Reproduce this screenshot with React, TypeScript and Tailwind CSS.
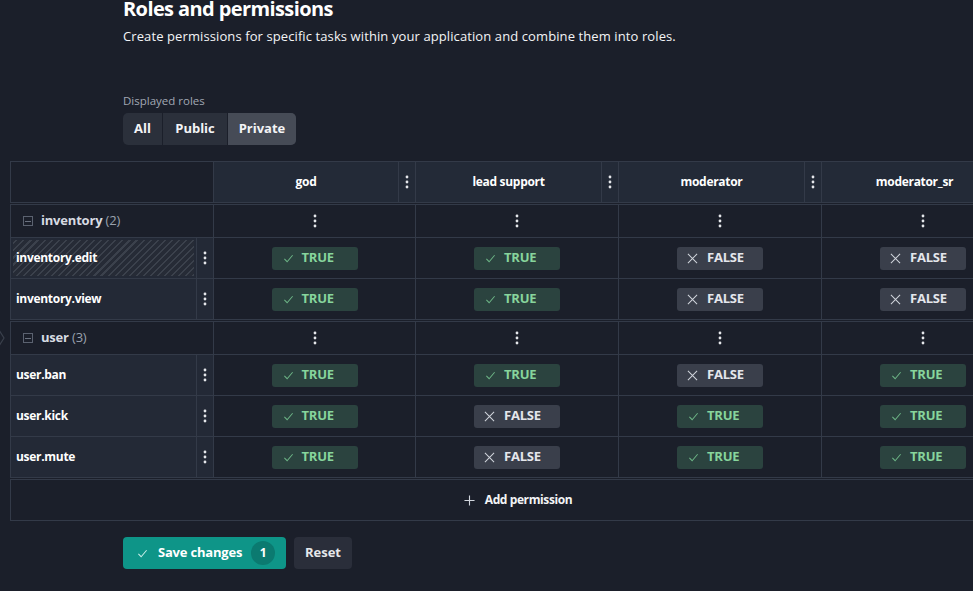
import React from "react";

const roles = ["god", "lead support", "moderator", "moderator_sr"];
const colW = ["w-[202px]", "w-[203px]", "w-[203px]", "w-[203px]"];

const groups = [
  {
    name: "inventory",
    perms: [
      { name: "inventory.edit", values: [true, true, false, false], changed: true },
      { name: "inventory.view", values: [true, true, false, false] },
    ],
  },
  {
    name: "user",
    perms: [
      { name: "user.ban", values: [true, true, false, true] },
      { name: "user.kick", values: [true, false, true, true] },
      { name: "user.mute", values: [true, false, true, true] },
    ],
  },
];

function Kebab() {
  return (
    <svg width="4" height="14" viewBox="0 0 4 14" className="text-gray-200">
      <circle cx="2" cy="2" r="1.4" fill="currentColor" />
      <circle cx="2" cy="7" r="1.4" fill="currentColor" />
      <circle cx="2" cy="12" r="1.4" fill="currentColor" />
    </svg>
  );
}

function Check({ className }: { className?: string }) {
  return (
    <svg width="11" height="11" viewBox="0 0 12 12" className={className}>
      <path d="M1.5 6.5 L4.5 9.5 L10.5 2.5" fill="none" stroke="currentColor" strokeWidth="1.1" />
    </svg>
  );
}

function Cross() {
  return (
    <svg width="11" height="11" viewBox="0 0 12 12" className="text-gray-300">
      <path d="M1 1 L11 11 M11 1 L1 11" fill="none" stroke="currentColor" strokeWidth="1.1" />
    </svg>
  );
}

function Badge({ value }: { value: boolean }) {
  return value ? (
    <div className="flex h-[23px] w-[86px] items-center gap-[8px] rounded-[3px] bg-[#2b433f] pl-[11px] text-[13px] font-bold tracking-[-0.2px] text-[#87d59c]">
      <Check className="text-[#6db586]" />
      TRUE
    </div>
  ) : (
    <div className="flex h-[23px] w-[86px] items-center gap-[9px] rounded-[3px] bg-[#3a3f4b] pl-[10px] text-[13px] font-bold tracking-[-0.2px] text-[#e4e6eb]">
      <Cross />
      FALSE
    </div>
  );
}

export default function App() {
  return (
    <div className="relative h-[591px] w-[973px] overflow-hidden bg-[#1b1f2a] font-['Open_Sans',sans-serif] text-gray-100">
      {/* faint chevron at left edge */}
      <svg width="8" height="18" viewBox="0 0 8 18" className="absolute left-[-2px] top-[329px] text-[#3a404c]">
        <path d="M1 1 L6 9 L1 17" fill="none" stroke="currentColor" strokeWidth="1.2" />
      </svg>

      <div className="pl-[123px]">
        <h1 className="mt-[-5px] text-[20px] leading-[28px] font-bold tracking-[-0.6px] text-white">Roles and permissions</h1>
        <p className="mt-[3px] text-[13px] leading-[20px] tracking-[0.1px] text-gray-100">
          Create permissions for specific tasks within your application and combine them into roles.
        </p>
        <div className="mt-[47px] text-[11.5px] leading-[16px] text-[#a1a7b3]">Displayed roles</div>
        <div className="mt-[4px] flex h-[32px] w-fit overflow-hidden rounded-[5px] bg-[#2b303b] text-[13px] font-bold text-gray-100">
          <div className="flex w-[40px] items-center justify-center border-r border-[#1b1f2a]">All</div>
          <div className="flex w-[65px] items-center justify-center border-r border-[#1b1f2a]">Public</div>
          <div className="flex w-[68px] items-center justify-center bg-[#464b56]">Private</div>
        </div>
      </div>

      <div className="ml-[10px] mt-[16px] w-[1016px] text-[12px] tracking-[-0.3px]">
        {/* header */}
        <div className="flex border-l border-t border-[#333a48]">
          <div className="h-[41px] w-[203px] border-b border-r border-[#333a48]" />
          {roles.map((r, i) => (
            <div key={r} className={`flex h-[41px] ${colW[i]} border-b border-r border-[#333a48] bg-[#232a37]`}>
              <div className="flex flex-1 items-center justify-center border-r border-[#333a48] font-bold text-white">{r}</div>
              <div className="flex w-[16px] items-center justify-center">
                <Kebab />
              </div>
            </div>
          ))}
        </div>

        {groups.map((g) => (
          <div key={g.name} className="mt-px border-l border-t border-[#333a48]">
            <div className="flex h-[33px]">
              <div className="flex w-[203px] items-center gap-[8px] border-b border-r border-[#333a48] pl-[12px]">
                <div className="flex h-[10px] w-[10px] items-center justify-center border border-[#5b6270]">
                  <div className="h-px w-[6px] bg-[#6b7280]" />
                </div>
                <span className="text-[13px] font-bold tracking-[-0.2px] text-[#d7dbe2]">
                  {g.name} <span className="font-normal text-[#9aa1ad]">({g.perms.length})</span>
                </span>
              </div>
              {roles.map((r, i) => (
                <div key={r} className={`flex ${colW[i]} items-center justify-center border-b border-r border-[#333a48]`}>
                  <Kebab />
                </div>
              ))}
            </div>
            {g.perms.map((p) => (
              <div key={p.name} className="flex h-[41px]">
                <div className="flex w-[186px] items-center border-b border-r border-[#333a48] bg-[#232936] p-[2px]">
                  <div
                    className={`flex h-full w-full items-center pl-[3px] font-bold text-white ${
                      p.changed ? "bg-[repeating-linear-gradient(-45deg,#3b414c_0px,#3b414c_1.5px,#262b36_1.5px,#262b36_5px)]" : ""
                    }`}
                  >
                    {p.name}
                  </div>
                </div>
                <div className="flex w-[17px] items-center justify-center border-b border-r border-[#333a48] bg-[#232936]">
                  <Kebab />
                </div>
                {p.values.map((v, i) => (
                  <div key={i} className={`flex ${colW[i]} items-center justify-center border-b border-r border-[#333a48]`}>
                    <Badge value={v} />
                  </div>
                ))}
              </div>
            ))}
          </div>
        ))}

        {/* add permission */}
        <div className="mt-px flex h-[42px] items-center justify-center gap-[10px] border border-[#333a48] text-[12px] font-bold tracking-[-0.4px] text-gray-100">
          <svg width="11" height="11" viewBox="0 0 12 12" className="text-gray-300">
            <path d="M6 0.5 V11.5 M0.5 6 H11.5" fill="none" stroke="currentColor" strokeWidth="1.2" />
          </svg>
          Add permission
        </div>
      </div>

      <div className="ml-[123px] mt-[16px] flex gap-[8px]">
        <button className="flex h-[32px] w-[163px] items-center rounded-[4px] bg-[#0e9588] pl-[14px] text-[13px] font-bold tracking-[-0.2px] text-white">
          <Check className="text-[#c9efe9]" />
          <span className="ml-[10px]">Save changes</span>
          <span className="ml-[9px] flex h-[24px] w-[24px] items-center justify-center rounded-full bg-[#0b7a70] text-[12px]">1</span>
        </button>
        <button className="flex h-[32px] w-[58px] items-center justify-center rounded-[4px] bg-[#2a2e3a] text-[13px] font-bold text-gray-200">
          Reset
        </button>
      </div>
    </div>
  );
}
